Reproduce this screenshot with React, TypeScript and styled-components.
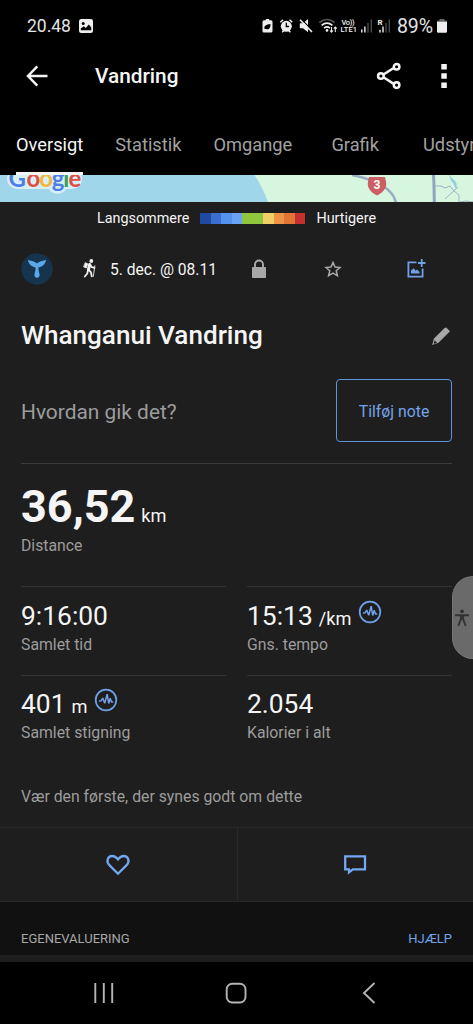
import type { ReactNode } from "react";
import styled, { createGlobalStyle } from "styled-components";

const TABS = ["Oversigt", "Statistik", "Omgange", "Grafik", "Udstyr"];

const PACE_COLORS = ["#1f4a9f", "#3a6fd0", "#5591ee", "#69a2f7", "#8fc63c", "#8fc63c", "#f2ce64", "#ef9444", "#e27533", "#c5302f"];

const STATS = [
  { value: "9:16:00", label: "Samlet tid" },
  { value: "15:13", unit: "/km", label: "Gns. tempo", insight: true },
  { value: "401", unit: "m", label: "Samlet stigning", insight: true },
  { value: "2.054", label: "Kalorier i alt" },
];

export default function App() {
  return (
    <Screen>
      <GlobalStyle />
      <StatusBar>
        <Clock>20.48</Clock>
        <PictureIcon />
        <StatusIcons />
        <Battery>89%</Battery>
        <BatteryIcon />
      </StatusBar>
      <AppBar>
        <BackIcon />
        <ScreenTitle>Vandring</ScreenTitle>
        <ShareIcon />
        <MoreIcon />
      </AppBar>
      <Tabs>
        {TABS.map((tab, i) => (
          <Tab key={tab}>
            <TabText $active={i === 0}>{tab}</TabText>
          </Tab>
        ))}
      </Tabs>
      <RouteMap />
      <Legend>
        <span>Langsommere</span>
        <Scale>
          {PACE_COLORS.map((color, i) => (
            <Swatch key={i} $color={color} />
          ))}
        </Scale>
        <span>Hurtigere</span>
      </Legend>
      <Meta>
        <Avatar />
        <HikerIcon />
        <DateText>5. dec. @ 08.11</DateText>
        <LockIcon />
        <StarIcon />
        <AddImageIcon />
      </Meta>
      <TitleRow>
        <Title>Whanganui Vandring</Title>
        <PencilIcon />
      </TitleRow>
      <NoteRow>
        <Prompt>Hvordan gik det?</Prompt>
        <NoteButton>Tilføj note</NoteButton>
      </NoteRow>
      <Distance>
        <DistanceValue>
          36,52<Unit>km</Unit>
        </DistanceValue>
        <Label>Distance</Label>
      </Distance>
      <StatGrid>
        {STATS.map((stat) => (
          <Stat key={stat.label}>
            <StatValue>
              {stat.value}
              {stat.unit && <Unit>{stat.unit}</Unit>}
              {stat.insight && <InsightIcon />}
            </StatValue>
            <Label>{stat.label}</Label>
          </Stat>
        ))}
      </StatGrid>
      <LikeText>Vær den første, der synes godt om dette</LikeText>
      <Actions>
        <Action>
          <HeartIcon />
        </Action>
        <Action>
          <CommentIcon />
        </Action>
      </Actions>
      <SectionHeader>
        <span>EGENEVALUERING</span>
        <HelpLink>HJÆLP</HelpLink>
      </SectionHeader>
      <NavBar>
        <NavIcon>
          <path d="M5.3 3v20M13.8 3v20M22.2 3v20" />
        </NavIcon>
        <NavIcon>
          <rect x="3.7" y="3.7" width="18.8" height="18.8" rx="5.5" />
        </NavIcon>
        <NavIcon>
          <path d="M18.5 3 8 13l10.500 10" />
        </NavIcon>
      </NavBar>
      <AccessTab>
        <svg width="16" height="18" viewBox="0 0 16 18">
          <circle cx="8" cy="2.300" r="1.900" fill="#333" />
          <path d="M1 6.200H15M6.900 6.500V10L4.300 16.800M9.100 6.500V10l2.600 6.800M8 6.500v4.500" fill="none" stroke="#333" strokeWidth="2" />
        </svg>
      </AccessTab>
    </Screen>
  );
}

function NavIcon({ children }: { children: ReactNode }) {
  return (
    <svg width="26" height="26" viewBox="0 0 26 26" fill="none" stroke="#b4b4b4" strokeWidth="1.9">
      {children}
    </svg>
  );
}

function PictureIcon() {
  return (
    <svg width="14" height="14" viewBox="0 0 14 14">
      <rect width="14" height="14" rx="2.200" fill="#eee" />
      <circle cx="4.200" cy="4.500" r="1.500" fill="#000" />
      <path d="M1.800 11.200V9.500L4.800 7.300l2 1.700 3-3.500 2.500 3v2.700z" fill="#000" />
    </svg>
  );
}

function StatusIcons() {
  return (
    <IconStrip width="132" height="20" viewBox="260 16 132 20" fill="none" stroke="#eee">
      <path d="M265.800 19h3.400v1.200h1.800a1.500 1.500 0 0 1 1.500 1.500v9.300a1.500 1.500 0 0 1-1.500 1.500h-7a1.500 1.500 0 0 1-1.500-1.500v-9.300a1.500 1.500 0 0 1 1.500-1.500h1.800z" fill="#eee" stroke="none" />
      <path d="M264.500 29c-.5-3.500 1.500-4.500 6-5 .2 4-1.500 6-4.500 5" fill="#000" stroke="none" />
      <circle cx="286.300" cy="26.300" r="5.500" fill="#eee" stroke="none" />
      <path d="M286.300 22.800v3.700h2.800" stroke="#000" strokeWidth="1.300" />
      <path d="M280.300 22.300l2.800-2.500M292.300 22.300l-2.800-2.500M282.200 32.300l1.500-1.500M290.400 32.300l-1.500-1.500" strokeWidth="1.500" />
      <path d="M299.800 23.200h3.200l5-4.200v13.300l-5-4h-3.200z" fill="#eee" stroke="none" />
      <path d="M301.300 19.200l11 11.300" stroke="#000" strokeWidth="1.200" />
      <path d="M300 19.700l12 12.300" strokeWidth="1.600" />
      <path d="M319.300 22.500q7.700-6 15.400 0" stroke="#555" strokeWidth="1.700" />
      <path d="M321.600 25.300q5.400-4.200 10.800 0M324.100 28.100q2.900-2.300 5.800 0" strokeWidth="1.700" />
      <circle cx="327" cy="30.400" r="1.300" fill="#eee" stroke="none" />
      <path d="M331.500 27v5M330 30.500l1.500 1.700 1.500-1.700M335.300 32v-5M333.800 28.700l1.500-1.700 1.500 1.700" strokeWidth="1.100" />
      <text x="341.500" y="25.200" fontSize="7.500" fontWeight="500" fontFamily="Roboto, sans-serif" fill="#eee" stroke="none" textLength="13">Vo))</text>
      <text x="340.500" y="32.300" fontSize="7.500" fontWeight="500" fontFamily="Roboto, sans-serif" fill="#eee" stroke="none" textLength="16.500">LTE1</text>
      <path d="M361.800 29.500v3M364.900 26.500v6" strokeWidth="1.400" />
      <path d="M368 23v9.500M371.300 19.500v13" stroke="#4a4a4a" strokeWidth="1.400" />
      <text x="377.500" y="25.300" fontSize="8" fontWeight="700" fontFamily="Roboto, sans-serif" fill="#eee" stroke="none">R</text>
      <path d="M380 29.800v2.700M383 26.500v6" strokeWidth="1.400" />
      <path d="M386 23v9.500M389.300 19.500v13" stroke="#4a4a4a" strokeWidth="1.400" />
    </IconStrip>
  );
}

function BatteryIcon() {
  return (
    <svg width="10" height="14" viewBox="0 0 10 14">
      <path d="M2.500 0h5v1.500H9a1 1 0 0 1 1 1V4H0V2.500a1 1 0 0 1 1-1h1.500z" fill="#666" />
      <path d="M0 2.800h10v9.700a1.300 1.300 0 0 1-1.300 1.300H1.300A1.300 1.300 0 0 1 0 12.500z" fill="#eee" />
    </svg>
  );
}

function BackIcon() {
  return (
    <svg width="22" height="22" viewBox="0 0 22 22" fill="none" stroke="#f2f2f2" strokeWidth="2.500">
      <path d="M11.300 1.300 2 11l9.300 9.700M2 11h19.500" />
    </svg>
  );
}

function ShareIcon() {
  return (
    <ShareSvg width="26" height="28" viewBox="0 0 26 28" fill="none" stroke="#f5f5f5" strokeWidth="2.500">
      <path d="M7.500 12.500 17.300 6.300M7.500 15.300l9.800 6.300" />
      <circle cx="4.900" cy="14" r="2.800" />
      <circle cx="20.600" cy="4.800" r="2.800" />
      <circle cx="20.600" cy="23.100" r="2.800" />
    </ShareSvg>
  );
}

function MoreIcon() {
  return (
    <svg width="6" height="24" viewBox="0 0 6 24" fill="#f5f5f5">
      <path d="M.300 0h5.500v5.500H.300zM.300 9.200h5.500v5.500H.300zM.300 18.400h5.500v5.500H.300z" />
    </svg>
  );
}

function RouteMap() {
  return (
    <MapSvg width="473" height="27" viewBox="0 0 473 27">
      <rect width="473" height="27" fill="#9fd6ea" />
      <path d="M254.500 0q8 12 13.500 27H473V0z" fill="#d7f6df" />
      <path d="M352 0q20 4 31 11t13 17" fill="none" stroke="#9aaec2" strokeWidth="2.600" />
      <path d="M433.500 0q.5 6 .800 27" fill="none" stroke="#8fa4bf" strokeWidth="3" />
      <path d="M435 11h6l4 2 5-2 4 5 5 4v7M458 12l-13 12M460 27l6-1 7 1" fill="none" stroke="#9fb0c4" strokeWidth="1" />
      <path d="M449 0q1 5 4 8l3 6q2-6-2-9t-4-5z" fill="#8fcfe6" />
      <path d="M369 2h16l.700 3q1.500 5-1 9-2 3.500-7.700 6.500-5.700-3-7.700-6.500-2.500-4-1-9z" fill="#cb5f63" />
      <text x="377" y="14.200" textAnchor="middle" fontFamily="Roboto, sans-serif" fontWeight="700" fontSize="12" fill="#fff">3</text>
      <LogoHalo d="M17 4h55M57.500 4v5" />
      <LogoText y="12">
        <tspan x="8.500" fill="#4c7fe8">G</tspan>
        <tspan x="26.500" fill="#dd5144">o</tspan>
        <tspan x="39.200" fill="#efb93a">o</tspan>
        <tspan x="51.800" fill="#4c7fe8">g</tspan>
        <tspan x="63.300" fill="#3c9f57">l</tspan>
        <tspan x="68.500" fill="#dd5144">e</tspan>
      </LogoText>
    </MapSvg>
  );
}

function Avatar() {
  return (
    <svg width="32" height="32" viewBox="0 0 32 32">
      <circle cx="16" cy="16" r="15.700" fill="#17344f" />
      <path d="M7 6.800c2.500 1.400 6 .8 9 3.800 3-3 6.500-2.400 9-3.800-.3 4.300-3.300 6.600-7.500 7.800-.3 2.200.3 3.900.9 5.800.7 2.200-.2 4.300-2.400 4.300s-3.100-2.100-2.400-4.300c.6-1.900 1.200-3.600.9-5.800C10.300 13.400 7.300 11.100 7 6.800z" fill="#5aa9e6" />
    </svg>
  );
}

function HikerIcon() {
  return (
    <HikerSvg width="13" height="19" viewBox="0 0 13 19" fill="none" stroke="#f2f2f2" strokeLinecap="round" strokeLinejoin="round">
      <circle cx="8.300" cy="2" r="1.900" fill="#f2f2f2" stroke="none" />
      <path d="M2.500 3.800 4.800 4.800 3.200 9 .900 8z" fill="#f2f2f2" strokeWidth=".8" />
      <path d="M6.600 5.500 5.500 10.300" strokeWidth="3.100" />
      <path d="M5.500 10.500 8 13.300l.700 4M5 11 4.300 14.500l-2.500 3M7.300 5.800l1.500 2.400 2.700.6" strokeWidth="1.800" />
      <path d="M11.800 6.800 10.300 17.500" strokeWidth=".9" />
    </HikerSvg>
  );
}

function LockIcon() {
  return (
    <LockSvg width="16" height="20" viewBox="0 0 16 20">
      <path d="M4 9V5.500a4 4 0 0 1 8 0V9" fill="none" stroke="#a8a8a8" strokeWidth="1.900" />
      <rect x="1" y="8" width="14" height="11" rx=".8" fill="#a8a8a8" />
    </LockSvg>
  );
}

function StarIcon() {
  return (
    <StarSvg width="18" height="18" viewBox="0 0 18 18">
      <path d="M9 2.400 11 7l5 .500-3.800 3.300 1.200 4.900L9 13.100l-4.400 2.600 1.200-4.900L2 7.500 7 7z" fill="none" stroke="#a8a8a8" strokeWidth="1.500" />
    </StarSvg>
  );
}

function AddImageIcon() {
  return (
    <svg width="20" height="20" viewBox="0 0 20 20" fill="none" stroke="#6fa0e8" strokeWidth="1.800">
      <path d="M10.500 3.400H2.400v14.200h14.200V9.500M15.700 0v8M12 4h7.500" />
      <path d="M5 14.500v-3l2.700-2.300 2 2.500 1.500-1.300 2.300 2.500v1.600z" fill="#6fa0e8" stroke="none" />
    </svg>
  );
}

function PencilIcon() {
  return (
    <svg width="20" height="20" viewBox="0 0 20 20">
      <path d="M15.300 1.500 19 5.200 7.500 16.800 1.200 19 3 12.500 13.600 2z" fill="#a8a8a8" />
      <path d="M3.700 14.500 6 16.800 3.200 17.700 2.700 17.200z" fill="#1e1e1e" />
    </svg>
  );
}

function InsightIcon() {
  return (
    <InsightSvg width="24" height="24" viewBox="0 0 24 24" fill="none" stroke="#70a0e8" strokeWidth="1.500">
      <circle cx="12" cy="12" r="10.300" strokeWidth="1.700" />
      <path d="M5 13h2l1.700-3 2 5.200 2.500-9 1.500 9.300 1.500-5.200L17.500 14h1.800" strokeLinejoin="bevel" />
    </InsightSvg>
  );
}

function HeartIcon() {
  return (
    <svg width="26" height="22" viewBox="0 0 26 22">
      <path d="M13 19.700 3.900 10.600C1.200 7.600 2.500 2 7.300 2 10 2 11.500 3.500 13 5.400 14.500 3.500 16 2 18.700 2c4.800 0 6.100 5.600 3.400 8.600z" fill="none" stroke="#74a6f2" strokeWidth="2.300" />
    </svg>
  );
}

function CommentIcon() {
  return (
    <svg width="24" height="22" viewBox="0 0 24 22">
      <path d="M2.200 2.300H22v13H9.800L6 18.300v-3H2.200z" fill="none" stroke="#74a6f2" strokeWidth="2.300" />
    </svg>
  );
}

const GlobalStyle = createGlobalStyle`
  * {
    box-sizing: border-box;
  }
  body {
    margin: 0;
    background: #000;
    overflow: hidden;
  }
  svg {
    display: block;
    flex-shrink: 0;
  }
`;

const Screen = styled.div`
  position: relative;
  width: 473px;
  height: 1024px;
  display: flex;
  flex-direction: column;
  overflow: hidden;
  background: #1e1e1e;
  color: #f5f5f5;
  font-family: Roboto, sans-serif;
  font-size: 15.8px;
  white-space: nowrap;
`;

const StatusBar = styled.div`
  display: flex;
  align-items: center;
  height: 52px;
  padding: 0 26px 0 27px;
  background: #000;
  color: #e4e4e4;
  font-size: 17.5px;
`;

const Clock = styled.span`
  width: 52px;
`;

const IconStrip = styled.svg`
  margin-left: 167px;
`;

const Battery = styled.span`
  width: 40px;
  margin-left: 5px;
  font-size: 19.5px;
  letter-spacing: -0.1px;
`;

const AppBar = styled.div`
  display: flex;
  align-items: center;
  height: 48px;
  padding: 0 26px;
  background: #000;

  svg:last-child {
    margin-left: 39px;
  }
`;

const ScreenTitle = styled.h1`
  margin: 0 0 0 47px;
  font-size: 20.8px;
  font-weight: 500;
`;

const ShareSvg = styled.svg`
  margin-left: auto;
`;

const Tabs = styled.div`
  display: flex;
  height: 75px;
  overflow: hidden;
  background: #000;
`;

const Tab = styled.div`
  display: flex;
  flex-shrink: 0;
  justify-content: center;
  min-width: 94px;
  padding: 0 16px;
`;

const TabText = styled.span<{ $active: boolean }>`
  height: 75px;
  border-bottom: 3px solid ${({ $active }) => ($active ? "#f5f5f5" : "transparent")};
  color: ${({ $active }) => ($active ? "#f5f5f5" : "#a2a2a2")};
  font-size: 18.25px;
  line-height: 89px;
`;

const MapSvg = styled.svg`
  overflow: hidden;
`;

const LogoHalo = styled.path`
  fill: none;
  stroke: #d9eff8;
  stroke-width: 20px;
  stroke-linecap: round;
`;

const LogoText = styled.text`
  font-family: Lato, sans-serif;
  font-size: 24px;
  font-weight: 700;
`;

const Legend = styled.div`
  display: flex;
  align-items: center;
  justify-content: center;
  gap: 11px;
  height: 32px;
  font-size: 14.4px;
`;

const Scale = styled.div`
  display: flex;
`;

const Swatch = styled.div<{ $color: string }>`
  width: 10.5px;
  height: 11px;
  background: ${({ $color }) => $color};
`;

const Meta = styled.div`
  display: flex;
  align-items: center;
  height: 69px;
  padding-left: 21px;
`;

const HikerSvg = styled.svg`
  margin-left: 30px;
`;

const DateText = styled.span`
  width: 141px;
  margin-left: 14px;
  padding-top: 3px;
  font-size: 15.6px;
`;

const LockSvg = styled.svg`
  margin-right: 57px;
`;

const StarSvg = styled.svg`
  margin-right: 64px;
`;

const TitleRow = styled.div`
  display: flex;
  align-items: center;
  justify-content: space-between;
  height: 66px;
  padding: 0 22px 0 21px;
`;

const Title = styled.h2`
  margin: 0 0 2px;
  font-size: 26.1px;
  font-weight: 500;
`;

const NoteRow = styled.div`
  display: flex;
  align-items: center;
  justify-content: space-between;
  height: 95px;
  margin: 0 21px;
  padding-top: 10px;
  padding-bottom: 22px;
  border-bottom: 1px solid #3a3a3a;
`;

const Prompt = styled.span`
  padding-top: 3px;
  color: #9c9c9c;
  font-size: 20.9px;
`;

const NoteButton = styled.button`
  width: 116px;
  height: 63px;
  padding: 2px 0 0;
  border: 1.5px solid #5f93dc;
  border-radius: 4px;
  background: none;
  color: #74a3ea;
  font: inherit;
`;

const Distance = styled.div`
  height: 122px;
  padding: 16px 21px 0;
`;

const DistanceValue = styled.div`
  height: 54px;
  font-size: 45px;
  font-weight: 700;
  line-height: 54px;
`;

const Unit = styled.span`
  margin-left: 6px;
  font-size: 18.2px;
  font-weight: 400;
  line-height: 1;
`;

const Label = styled.div`
  color: #9c9c9c;
  line-height: 24px;
`;

const StatGrid = styled.div`
  display: grid;
  grid-template-columns: 205px 205px;
  column-gap: 21px;
  padding: 0 21px;
`;

const Stat = styled.div`
  height: 88.5px;
  padding-top: 14px;
  border-top: 1.5px solid #343434;

  &:nth-child(n + 3) {
    padding-top: 13.5px;
  }
`;

const StatValue = styled.div`
  display: flex;
  align-items: baseline;
  height: 32px;
  font-size: 26.4px;
  line-height: 31px;
`;

const InsightSvg = styled.svg`
  align-self: flex-start;
  margin: -1.5px 0 0 6.5px;
`;

const LikeText = styled.div`
  height: 64px;
  padding-left: 21px;
  color: #9c9c9c;
  line-height: 67px;
`;

const Actions = styled.div`
  display: grid;
  grid-template-columns: 1fr 1fr;
  height: 75px;
  border-top: 1px solid #292929;
  border-bottom: 1px solid #292929;
`;

const Action = styled.div`
  display: flex;
  align-items: center;
  justify-content: center;

  & + & {
    border-left: 1px solid #292929;
  }
`;

const SectionHeader = styled.div`
  display: flex;
  align-items: center;
  justify-content: space-between;
  height: 60px;
  padding: 20px 21px 0;
  border-bottom: 7px solid #1e1e1e;
  background: #111;
  color: #a8a8a8;
  font-size: 13px;
`;

const HelpLink = styled.span`
  color: #74a3ea;
`;

const NavBar = styled.div`
  display: flex;
  align-items: center;
  justify-content: space-between;
  flex: 1;
  padding: 0 91px 0 90px;
  background: #000;
`;

const AccessTab = styled.div`
  position: absolute;
  top: 576px;
  right: 0;
  display: flex;
  align-items: center;
  width: 21px;
  height: 83px;
  padding-left: 1px;
  border: 1px solid #777;
  border-right: 0;
  border-radius: 21px 0 0 21px;
  background: #6a6a6a;
`;
